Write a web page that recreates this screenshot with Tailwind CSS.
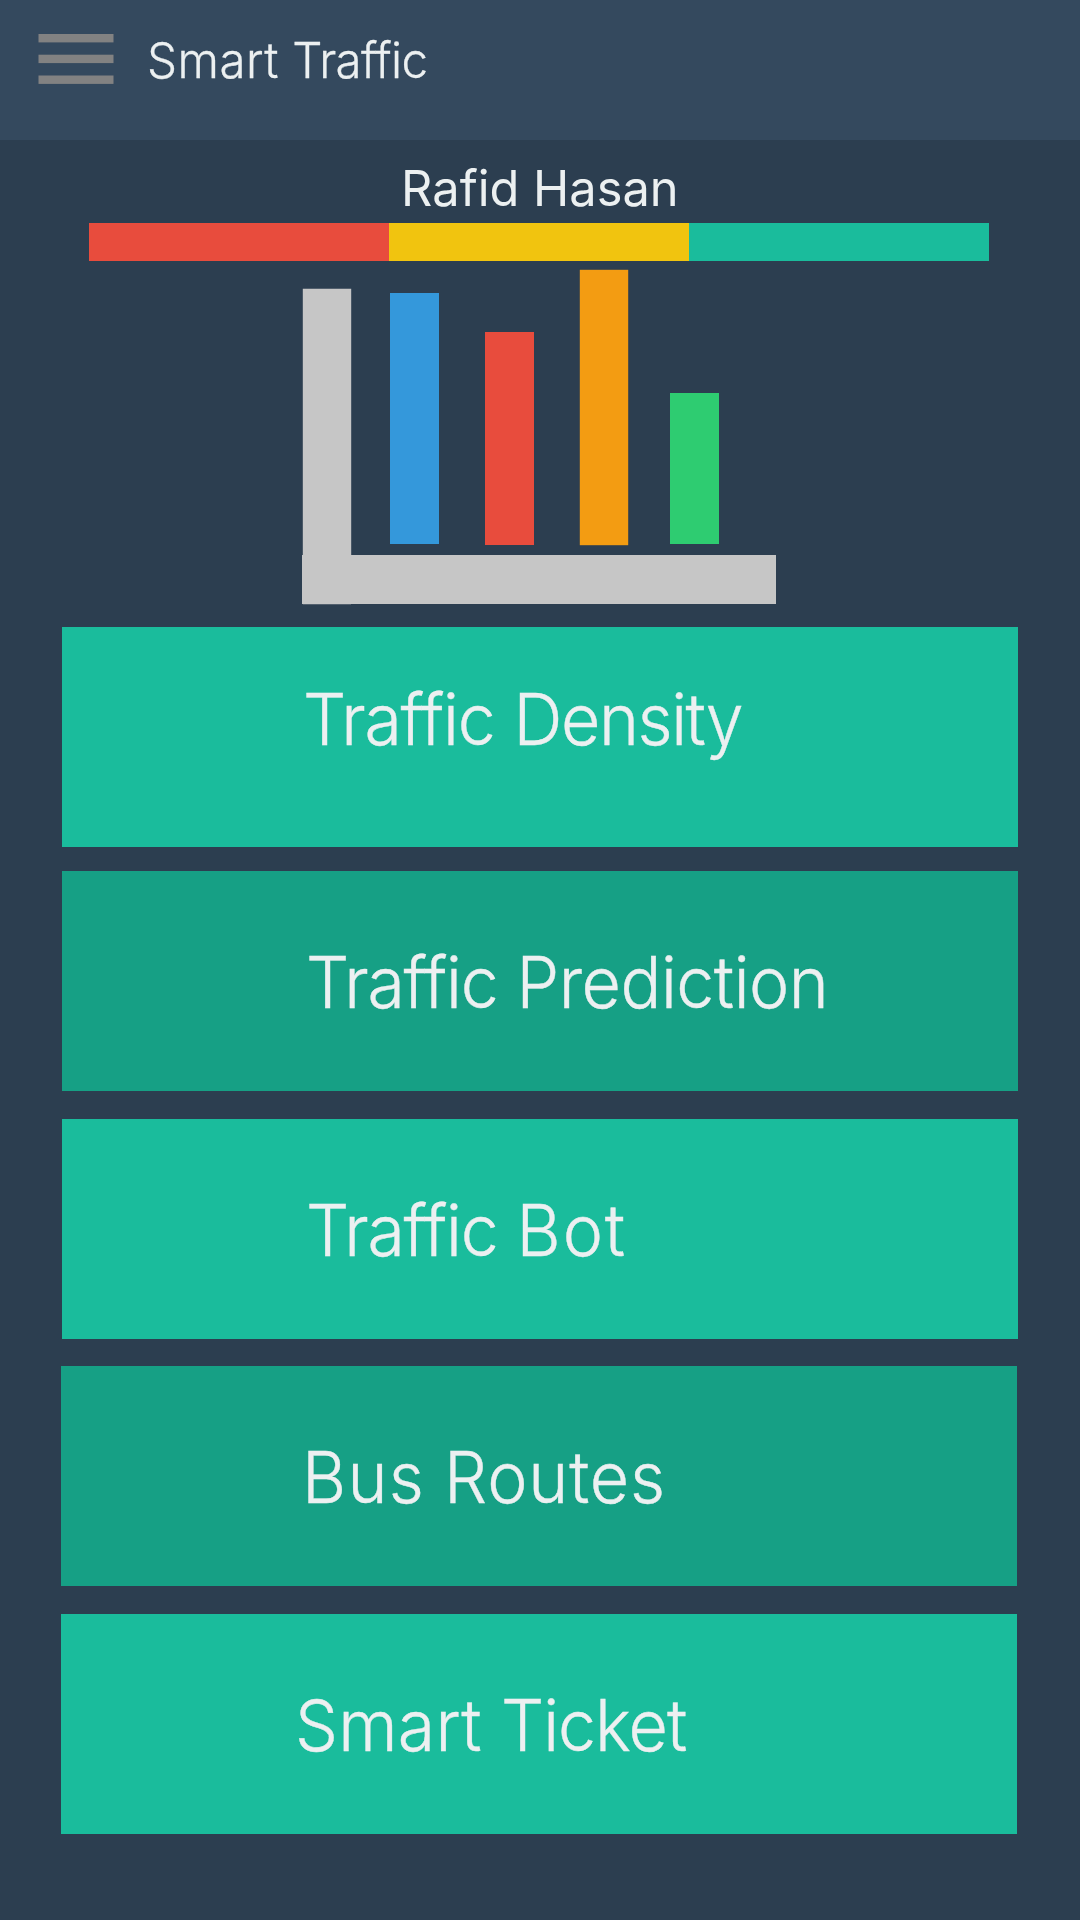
<!DOCTYPE html>
<html lang="en">
<head>
<meta charset="utf-8">
<title>Smart Traffic</title>
<script src="https://cdn.jsdelivr.net/npm/@tailwindcss/browser@4"></script>
</head>
<body class="bg-[#2c3e50]">
<div class="flex h-[1920px] w-[1080px] flex-col overflow-hidden bg-[#2c3e50] font-['Inter','Liberation_Sans',sans-serif] text-[#ecf0f1]">
  <header class="flex h-[140px] items-start bg-[#34495e]">
    <svg class="mt-[30px] ml-9 h-[60px] w-20 shrink-0" viewBox="36 30 80 60" fill="#828282" aria-label="Menu">
      <rect x="38.5" y="34" width="75" height="8.4"/>
      <rect x="38.5" y="54.7" width="75" height="8.4"/>
      <rect x="38.5" y="75.5" width="75" height="8.4"/>
    </svg>
    <h1 class="mt-[30px] ml-[31px] origin-left scale-x-[0.96] text-[49.5px] leading-[60px] font-light whitespace-nowrap [-webkit-text-stroke:0.3px_#ecf0f1]"><span class="tracking-[0.5px]">Smart</span> <span class="tracking-[-0.7px]">Traffic</span></h1>
  </header>

  <main class="flex flex-col">
    <div class="flex justify-center pt-[18px]">
      <h2 class="h-[65px] scale-x-[0.985] text-[49.5px] leading-[60px] whitespace-nowrap">Rafid Hasan</h2>
    </div>

    <div class="ml-[89px] grid h-[38px] w-[900px] grid-cols-3">
      <div class="bg-[#e84c3d]"></div>
      <div class="bg-[#f1c40f]"></div>
      <div class="bg-[#1abc9c]"></div>
    </div>

    <svg class="ml-[300px] h-[366px] w-[480px] shrink-0" viewBox="300 261 480 366" aria-label="Traffic chart">
      <path d="M302.8 288.8h48.4V555H776v49H351v.3h-48.2V604H302v-49h.8z" fill="#c6c6c6"/>
      <rect x="390" y="293" width="49" height="251" fill="#3498db"/>
      <rect x="485" y="332" width="49" height="213" fill="#e84c3d"/>
      <rect x="579.8" y="269.8" width="48.4" height="275.4" fill="#f39c12"/>
      <rect x="670" y="393" width="49" height="151" fill="#2ecc71"/>
    </svg>

    <nav class="flex flex-col text-[70.8px] leading-[80px] font-light whitespace-nowrap [-webkit-text-stroke:0.4px_#ecf0f1]">
      <a class="ml-[62px] h-[220px] w-[956px] bg-[#1abc9c] pt-[52px] pl-[241px]"><span class="inline-block origin-left scale-x-[0.96]"><span class="tracking-[-1.25px]">Traffic</span> <span class="tracking-[-1.5px]">Density</span></span></a>
      <a class="mt-6 ml-[62px] h-[220px] w-[956px] bg-[#16a085] pt-[71px] pl-[244px]"><span class="inline-block origin-left scale-x-[0.96]"><span class="tracking-[-1.25px]">Traffic</span> <span class="tracking-[-0.5px]">Prediction</span></span></a>
      <a class="mt-7 ml-[62px] h-[220px] w-[956px] bg-[#1abc9c] pt-[71px] pl-[244px]"><span class="inline-block origin-left scale-x-[0.96]"><span class="tracking-[-1.25px]">Traffic</span> <span class="tracking-[2px]">Bot</span></span></a>
      <a class="mt-[27px] ml-[61px] h-[220px] w-[956px] bg-[#16a085] pt-[71px] pl-[241px]"><span class="inline-block origin-left scale-x-[0.96]"><span class="tracking-[1.3px]">Bus</span> <span class="tracking-[0.9px]">Routes</span></span></a>
      <a class="mt-7 ml-[61px] h-[220px] w-[956px] bg-[#1abc9c] pt-[71px] pl-[234px]"><span class="inline-block origin-left scale-x-[0.96]"><span class="tracking-[0.3px]">Smart</span> <span class="tracking-[-1px]">Ticket</span></span></a>
    </nav>
  </main>
</div>
</body>
</html>
